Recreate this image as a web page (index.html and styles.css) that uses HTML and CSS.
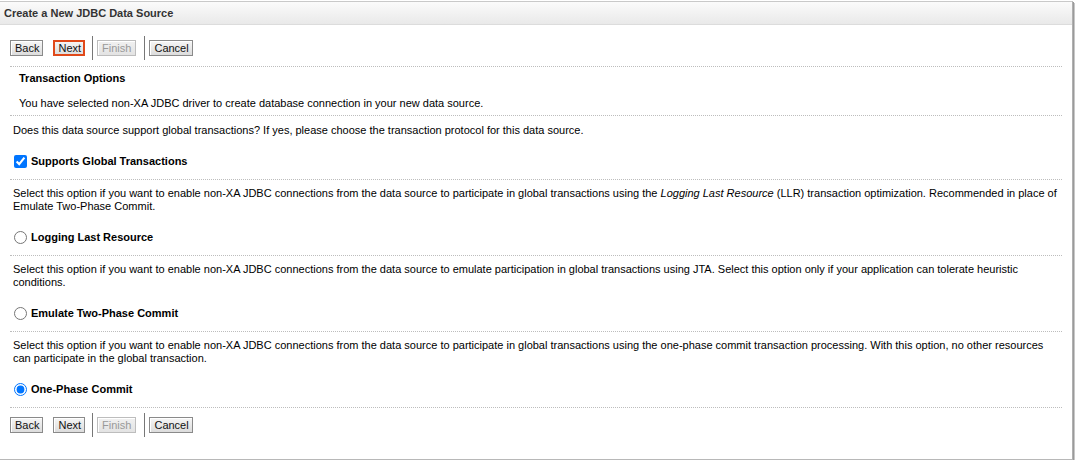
FILE: index.html
```html
<!DOCTYPE html>
<html>
<head>
<meta charset="utf-8">
<title>Create a New JDBC Data Source</title>
<link rel="stylesheet" href="styles.css">
</head>
<body>
<div class="panel">
  <div class="panel-header">Create a New JDBC Data Source</div>
  <div class="panel-body">
    <div class="toolbar">
      <button class="btn">Back</button>
      <button class="btn btn-focus">Next</button>
      <span class="tb-sep"></span>
      <button class="btn" disabled>Finish</button>
      <span class="tb-sep"></span>
      <button class="btn">Cancel</button>
    </div>
    <div class="sep"></div>
    <div class="intro">
      <div class="intro-title">Transaction Options</div>
      <div class="intro-text">You have selected non-XA JDBC driver to create database connection in your new data source.</div>
    </div>
    <div class="sep"></div>
    <div class="block block-first">
      <p class="desc">Does this data source support global transactions? If yes, please choose the transaction protocol for this data source.</p>
      <label class="option"><input type="checkbox" checked><span>Supports Global Transactions</span></label>
    </div>
    <div class="sep"></div>
    <div class="block">
      <p class="desc">Select this option if you want to enable non-XA JDBC connections from the data source to participate in global transactions using the <i>Logging Last Resource</i> (LLR) transaction optimization. Recommended in place of Emulate Two-Phase Commit.</p>
      <label class="option"><input type="radio" name="proto"><span>Logging Last Resource</span></label>
    </div>
    <div class="sep"></div>
    <div class="block">
      <p class="desc">Select this option if you want to enable non-XA JDBC connections from the data source to emulate participation in global transactions using JTA. Select this option only if your application can tolerate heuristic conditions.</p>
      <label class="option"><input type="radio" name="proto"><span>Emulate Two-Phase Commit</span></label>
    </div>
    <div class="sep"></div>
    <div class="block">
      <p class="desc">Select this option if you want to enable non-XA JDBC connections from the data source to participate in global transactions using the one-phase commit transaction processing. With this option, no other resources can participate in the global transaction.</p>
      <label class="option"><input type="radio" name="proto" checked><span>One-Phase Commit</span></label>
    </div>
    <div class="sep"></div>
    <div class="toolbar toolbar-bottom">
      <button class="btn">Back</button>
      <button class="btn">Next</button>
      <span class="tb-sep"></span>
      <button class="btn" disabled>Finish</button>
      <span class="tb-sep"></span>
      <button class="btn">Cancel</button>
    </div>
  </div>
</div>
</body>
</html>
```

FILE: styles.css
```css
html, body {
  margin: 0;
  padding: 0;
  background: #fff;
}
body {
  font-family: "Liberation Sans", Arial, sans-serif;
  font-size: 11px;
  line-height: 13px;
  color: #000;
}
.panel {
  margin-top: 1px;
  width: 1072px;
  height: 457px;
  border-top: 1px solid #c9c9c9;
  border-right: 1px solid #b0b0b0;
  border-bottom: 1px solid #b8b8b8;
  box-shadow: 1px 1px 0 #9a9a9a, 2px 2px 0 #c8c8c8;
  background: #fff;
  display: flex;
  flex-direction: column;
}
.panel-header {
  height: 22px;
  line-height: 22px;
  padding-left: 4px;
  font-weight: bold;
  color: #333;
  background: linear-gradient(#fbfbfb, #e9e9e9);
  border-bottom: 1px solid #dcdcdc;
}
.panel-body {
  padding: 0 10px 0 10px;
}
.toolbar {
  display: flex;
  align-items: center;
  height: 24px;
  margin-top: 11px;
  margin-bottom: 6px;
}
.toolbar-bottom {
  margin-top: 5px;
}
.btn {
  font-family: "Liberation Sans", Arial, sans-serif;
  font-size: 11px;
  line-height: 12px;
  height: 16px;
  padding: 0 3px 0 4px;
  margin: 0 10px 0 0;
  color: #111;
  background: linear-gradient(#f6f6f6, #dcdcdc);
  border: 1px solid #8a8a8a;
  border-radius: 0;
  box-shadow: inset 1px 1px 0 #fff;
}
.btn:disabled {
  color: #999;
  border-color: #bdbdbd;
  background: linear-gradient(#f1f1f1, #e3e3e3);
  padding: 0 4px 0 4px;
}
.btn-focus {
  outline: 2px solid #e0491a;
  outline-offset: -2px;
}
.tb-sep {
  width: 1px;
  height: 24px;
  background: #777;
  margin: 0 4px 0 -3px;
}
.tb-sep + .btn:disabled {
  margin-right: 11px;
}
.sep {
  border-top: 1px dotted #bdbdbd;
}
.intro {
  padding: 5px 0 5px 9px;
}
.intro-title {
  font-weight: bold;
}
.intro-text {
  margin-top: 12px;
}
.block {
  padding: 7px 0 11px 0;
}
.block-first {
  padding-top: 8px;
}
.desc {
  margin: 0 0 18px 3px;
}
.option {
  display: flex;
  align-items: center;
  font-weight: bold;
  height: 13px;
}
.option input {
  margin: 0 4px 0 4px;
  width: 13px;
  height: 13px;
}
```
